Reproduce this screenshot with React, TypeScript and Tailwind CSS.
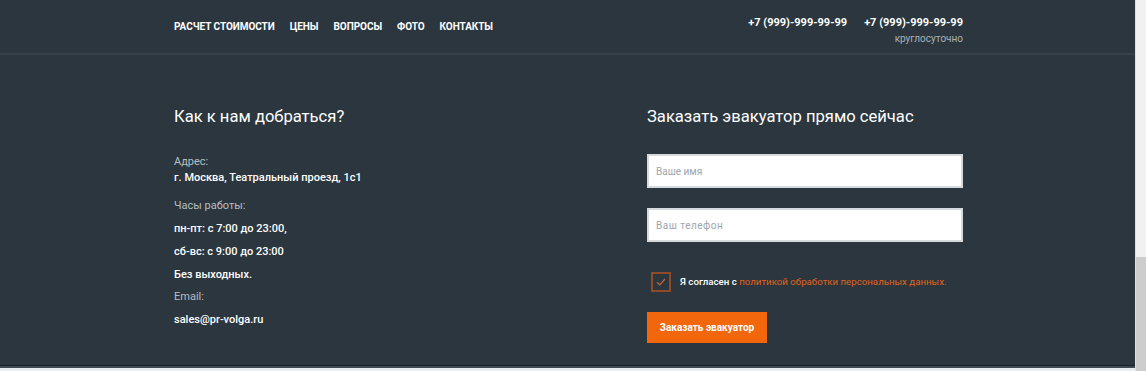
import React from "react";

export default function App() {
  const nav = ["РАСЧЕТ СТОИМОСТИ", "ЦЕНЫ", "ВОПРОСЫ", "ФОТО", "КОНТАКТЫ"];
  return (
    <div className="flex h-[371px] w-[1146px] overflow-hidden" style={{ fontFamily: "Roboto, 'Noto Sans', sans-serif" }}>
      <div className="flex flex-1 flex-col bg-[#e9edf0]">
        <div className="flex h-[365px] flex-col bg-[#2b363e]">
          <header className="flex h-[55px] border-b-2 border-[#35424a]">
            <div className="ml-[174px] flex w-[789px] items-start justify-between">
              <nav className="mt-[21px] flex gap-[15px] text-[10px] font-bold leading-[12px] tracking-[-0.05px] text-white">
                {nav.map((n) => (
                  <span key={n}>{n}</span>
                ))}
              </nav>
              <div className="mt-[16px] flex flex-col items-end">
                <div className="flex gap-[17px] text-[11px] font-bold leading-[14px] text-white">
                  <span>+7 (999)-999-99-99</span>
                  <span>+7 (999)-999-99-99</span>
                </div>
                <span className="mt-[3px] text-[10px] leading-[12px] text-[#a9b2b8]">круглосуточно</span>
              </div>
            </div>
          </header>
          <main className="ml-[174px] grid w-[789px] grid-cols-[473px_316px]">
            <div className="pt-[52px]">
              <h2 className="text-[16.6px] leading-[20px] text-white">Как к нам добраться?</h2>
              <div className="mt-[28px] text-[11px] leading-[13px]">
                <div className="text-[#b6bec3]">Адрес:</div>
                <div className="mt-[3px] font-medium text-white">г. Москва, Театральный проезд, 1с1</div>
                <div className="mt-[15px] text-[#b6bec3]">Часы работы:</div>
                <div className="mt-[10px] font-medium text-white">пн-пт: с 7:00 до 23:00,</div>
                <div className="mt-[10px] font-medium text-white">сб-вс: с 9:00 до 23:00</div>
                <div className="mt-[10px] font-medium text-white">Без выходных.</div>
                <div className="mt-[9px] text-[#b6bec3]">Email:</div>
                <div className="mt-[10px] font-medium text-white">sales@pr-volga.ru</div>
              </div>
            </div>
            <div className="pt-[52px]">
              <h2 className="text-[16.6px] leading-[20px] text-white">Заказать эвакуатор прямо сейчас</h2>
              <div className="mt-[27px] flex h-[34px] items-center border-2 border-[#d7dadc] bg-white px-[7px] text-[10px] text-[#9aa6ae]">
                Ваше имя
              </div>
              <div className="mt-[20px] flex h-[34px] items-center border-2 border-[#d7dadc] bg-white px-[7px] text-[10px] tracking-[0.5px] text-[#9aa6ae]">
                Ваш телефон
              </div>
              <div className="ml-[4px] mt-[30px] flex items-center gap-[9px]">
                <div className="flex h-[20px] w-[20px] items-center justify-center border-2 border-[#8f4a28]">
                  <svg width="10" height="8" viewBox="0 0 10 8" fill="none">
                    <path d="M1 4.2 L3.8 6.8 L9 1" stroke="#c0642e" strokeWidth="1.2" />
                  </svg>
                </div>
                <span className="text-[9.7px] font-medium text-white">
                  Я согласен с <span className="font-normal text-[#e2621a]">политикой обработки персональных данных.</span>
                </span>
              </div>
              <button className="mt-[20px] flex h-[31px] w-[120px] items-center justify-center bg-[#f2670c] text-[10px] font-bold text-white">
                Заказать эвакуатор
              </button>
            </div>
          </main>
        </div>
        <div className="h-[1px] bg-[#1a2126]" />
        <div className="h-[2px] bg-[#3f4b52]" />
      </div>
      <div className="flex w-[11px] flex-col border-l border-[#e0e0e0]">
        <div className="h-[257px] bg-[#f1f1f1]" />
        <div className="flex-1 bg-[#cdcdcd]" />
      </div>
    </div>
  );
}
